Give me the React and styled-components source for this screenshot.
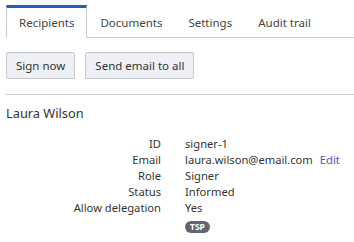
import React from "react";
import styled, { createGlobalStyle } from "styled-components";

const Global = createGlobalStyle`
  html, body { margin: 0; padding: 0; background: #fff; }
  body { font-family: "Noto Sans", "Open Sans", sans-serif; color: #333; }
`;

const Page = styled.div`
  padding: 5px 0 0 6px;
`;

const TabBar = styled.div`
  display: flex;
  border-bottom: 1px solid #c8c8c8;
  height: 32px;
`;

const Tab = styled.div`
  box-sizing: border-box;
  padding: 0 12px;
  height: 33px;
  display: flex;
  align-items: center;
  font-size: 11.5px;
  color: #444;
  border: 1px solid transparent;
  border-top: 3px solid transparent;
  ${(p) =>
    p.$active &&
    `
    border-color: #c8c8c8;
    border-top-color: #1f5fb8;
    border-bottom-color: #fff;
    background: #fff;
  `}
`;

const Toolbar = styled.div`
  display: flex;
  gap: 10px;
  padding: 14px 0 15px;
  border-bottom: 1px solid #c8c8c8;
`;

const Button = styled.button`
  box-sizing: border-box;
  height: 27px;
  padding: 0 9px;
  font-family: inherit;
  font-size: 11.5px;
  color: #333;
  background: #eef0f5;
  border: 1px solid #c4c6cc;
  border-radius: 2px;
`;

const Name = styled.div`
  font-size: 12.8px;
  margin: 9px 0 0;
  line-height: 18px;
`;

const Details = styled.div`
  display: grid;
  grid-template-columns: 155px auto;
  column-gap: 24px;
  margin-top: 14px;
  font-size: 11.2px;
  line-height: 16px;
`;

const Label = styled.div`
  text-align: right;
`;

const Value = styled.div``;

const Link = styled.a`
  color: #5b4dc8;
  margin-left: 7px;
  text-decoration: none;
`;

const Badge = styled.span`
  display: inline-block;
  background: #63676d;
  color: #fff;
  font-size: 8.5px;
  font-weight: 700;
  line-height: 12px;
  padding: 0 5px;
  border-radius: 6px;
  margin-top: 5px;
`;

export default function App() {
  const rows = [
    ["ID", "signer-1"],
    ["Email", "laura.wilson@email.com"],
    ["Role", "Signer"],
    ["Status", "Informed"],
    ["Allow delegation", "Yes"],
  ];
  return (
    <>
      <Global />
      <Page>
        <TabBar>
          <Tab $active>Recipients</Tab>
          <Tab>Documents</Tab>
          <Tab>Settings</Tab>
          <Tab>Audit trail</Tab>
        </TabBar>
        <Toolbar>
          <Button>Sign now</Button>
          <Button>Send email to all</Button>
        </Toolbar>
        <Name>Laura Wilson</Name>
        <Details>
          {rows.map(([l, v]) => (
            <React.Fragment key={l}>
              <Label>{l}</Label>
              <Value>
                {v}
                {l === "Email" && <Link href="#">Edit</Link>}
              </Value>
            </React.Fragment>
          ))}
          <div />
          <Value>
            <Badge>TSP</Badge>
          </Value>
        </Details>
      </Page>
    </>
  );
}
